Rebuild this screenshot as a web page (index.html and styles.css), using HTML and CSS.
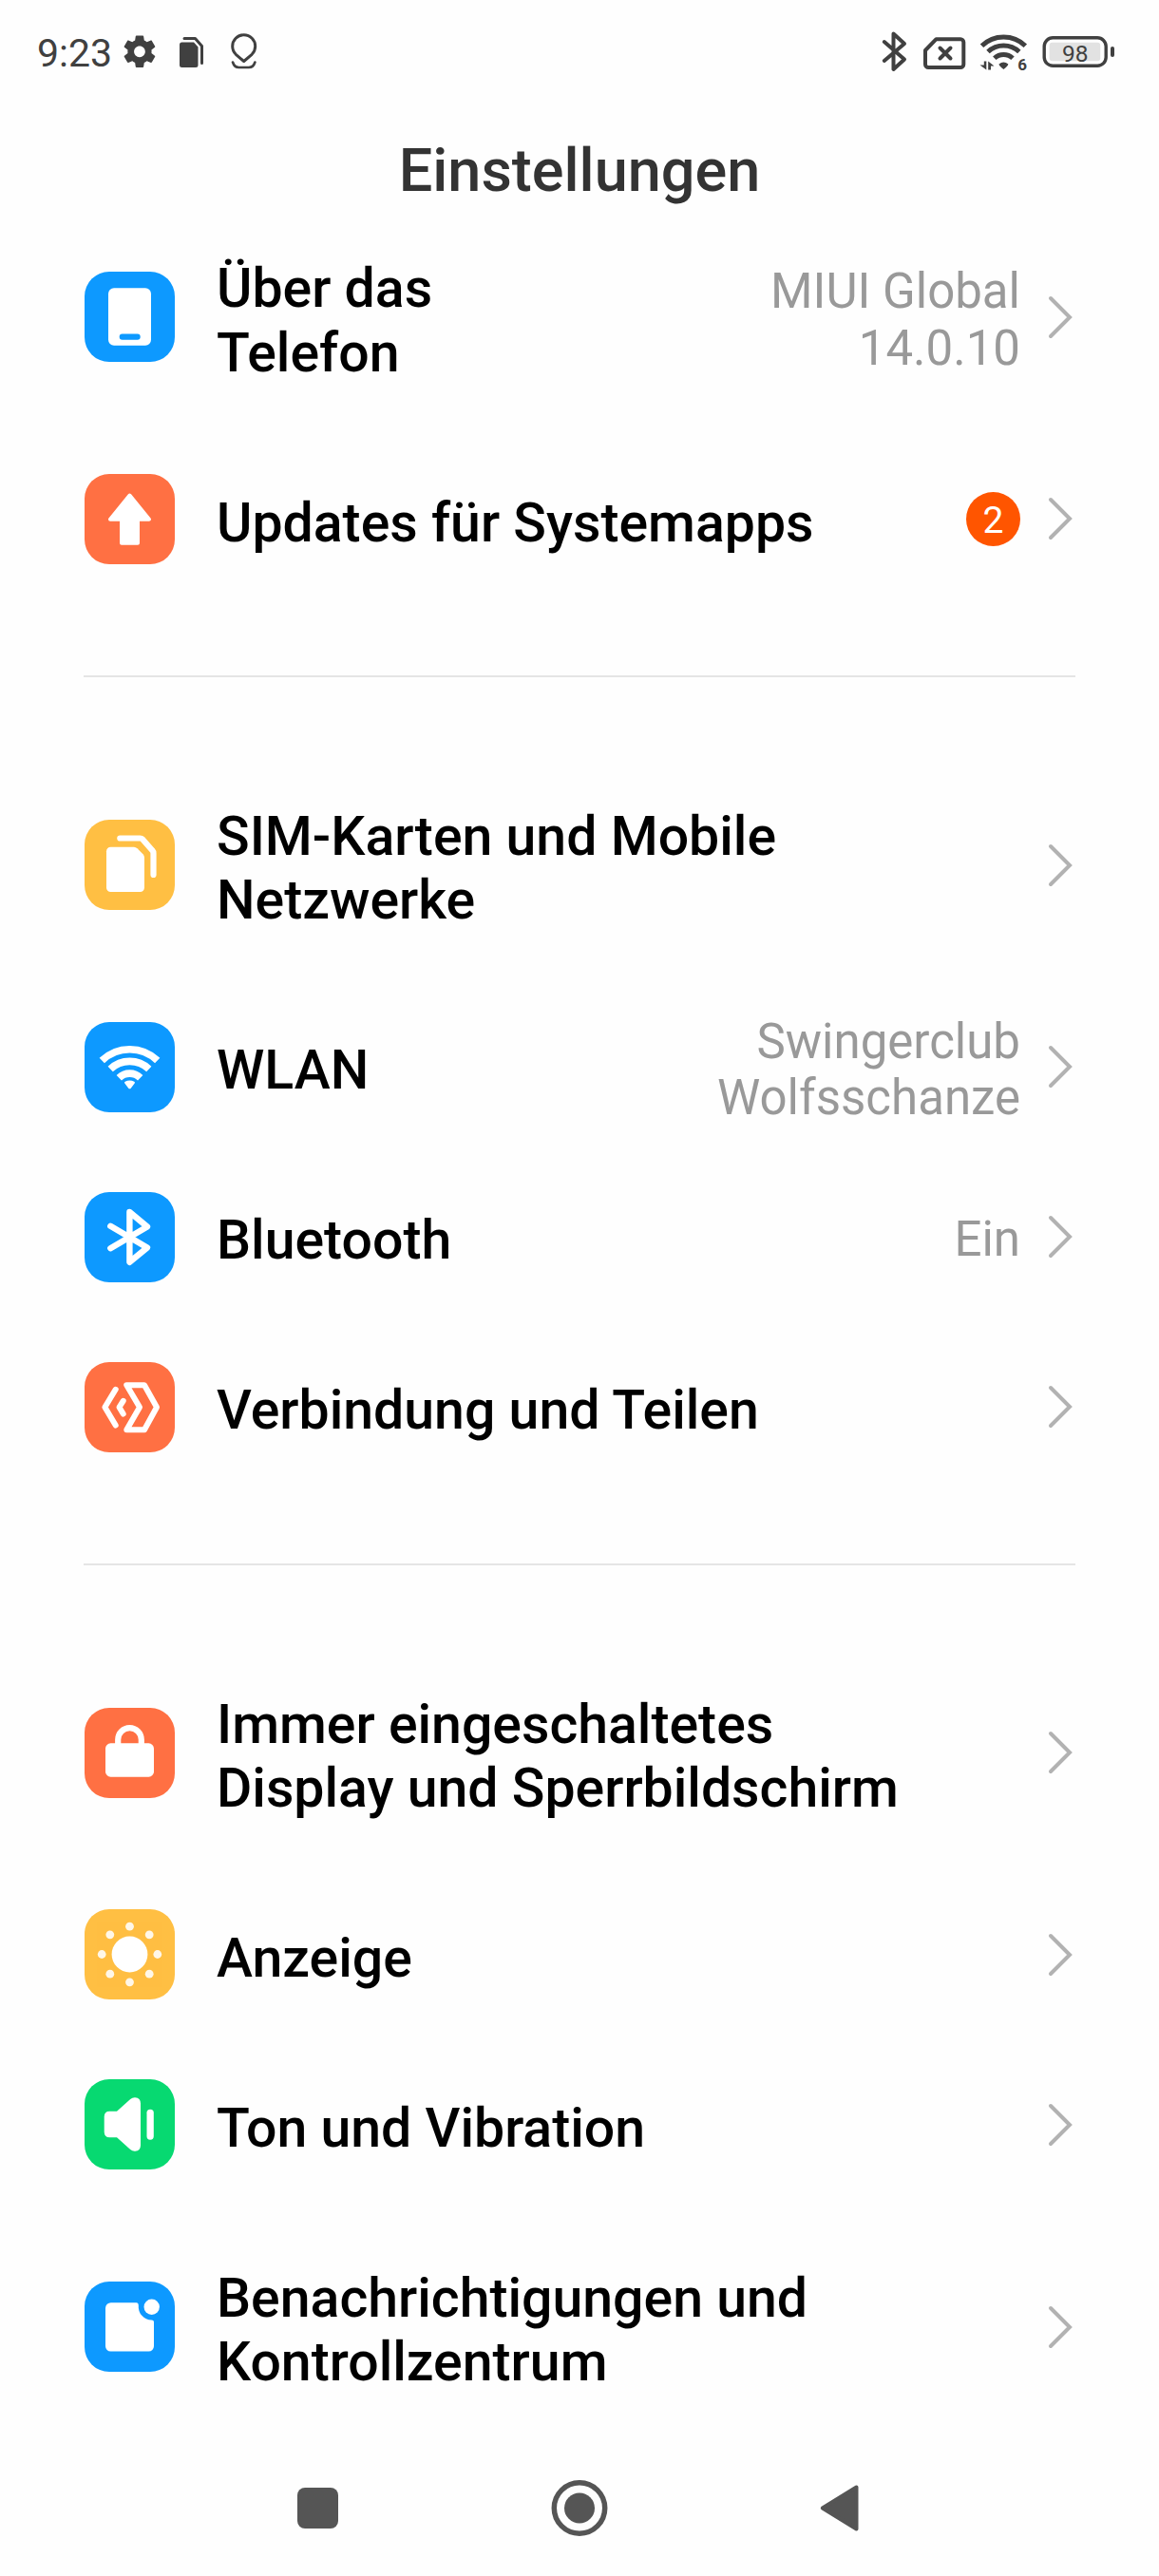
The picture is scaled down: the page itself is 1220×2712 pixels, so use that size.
FILE: index.html
```html
<!DOCTYPE html>
<html lang="de">
<head>
  <meta charset="UTF-8" />
  <meta name="viewport" content="width=device-width, initial-scale=1.0"/>
  <title>Einstellungen</title>
  <link rel="stylesheet" href="styles.css">
</head>
<body>

  <div class="status-bar">
    <div class="status-left">
      <span class="clock">9:23</span>
      <svg class="s-gear" width="34" height="44" viewBox="0 0 34 44">
        <path transform="translate(-3.2 2.1) scale(1.68)" d="M19.43 12.98c.04-.32.07-.64.07-.98s-.03-.66-.07-.98l2.11-1.65c.19-.15.24-.42.12-.64l-2-3.46c-.12-.22-.39-.3-.61-.22l-2.49 1c-.52-.4-1.08-.73-1.69-.98l-.38-2.65C14.46 2.18 14.25 2 14 2h-4c-.25 0-.46.18-.49.42l-.38 2.65c-.61.25-1.17.59-1.69.98l-2.49-1c-.23-.09-.49 0-.61.22l-2 3.46c-.13.22-.07.49.12.64l2.11 1.65c-.04.32-.07.65-.07.98s.03.66.07.98l-2.11 1.65c-.19.15-.24.42-.12.64l2 3.46c.12.22.39.3.61.22l2.49-1c.52.4 1.08.73 1.69.98l.38 2.65c.03.24.24.42.49.42h4c.25 0 .46-.18.49-.42l.38-2.65c.61-.25 1.17-.59 1.69-.98l2.49 1c.23.09.49 0 .61-.22l2-3.46c.12-.22.07-.49-.12-.64l-2.11-1.65zM12 15.5c-1.93 0-3.5-1.57-3.5-3.5s1.57-3.5 3.5-3.5 3.5 1.57 3.5 3.5-1.57 3.5-3.5 3.5z"/>
      </svg>
      <svg class="s-files" width="28" height="44" viewBox="0 0 28 44">
        <path d="M3.500 12.500h12.500l4.500 5v19a2.500 2.500 0 0 1-2.500 2.500H3.500A2.500 2.500 0 0 1 1 36.500V15a2.500 2.500 0 0 1 2.500-2.500z"/>
        <path class="line" d="M6 8.500h11.500l7 8V34.500" stroke-width="3"/>
      </svg>
      <svg class="s-pin" width="30" height="44" viewBox="0 0 30 44">
        <path class="line" d="M14.700 32.500L6.300 25.300A12 12 0 1 1 23.100 25.300z" stroke-width="3"/>
        <path class="line" d="M3 33.500c.8 2.600 2.600 5.500 6.500 5.500h10.400c3.900 0 5.700-2.900 6.500-5.500" stroke-width="2.600"/>
      </svg>
    </div>
    <div class="status-right">
      <svg width="30" height="44" viewBox="0 0 30 44">
        <path class="line" d="M2.800 12L24 30.500L12.500 41V3.500L24 14L2.800 32" stroke-width="4"/>
      </svg>
      <svg class="s-sim" width="46" height="44" viewBox="0 0 46 44">
        <path class="line" d="M14.500 9.200H40a3.300 3.300 0 0 1 3.300 3.300V35.700A3.300 3.300 0 0 1 40 39H6.300A3.300 3.300 0 0 1 3 35.700V21z" stroke-width="4"/>
        <path class="line" d="M18.500 18.500l11 11M29.500 18.500l-11 11" stroke-width="4"/>
      </svg>
      <svg class="s-wifi" width="52" height="44" viewBox="0 0 52 44">
        <path class="arc" d="M2.500 16.200A33 33 0 0 1 48.300 16.200" stroke-width="5"/>
        <path class="arc" d="M9 22.500A24 24 0 0 1 41.800 22.500" stroke-width="5"/>
        <path class="arc" d="M15.800 29.300A14 14 0 0 1 35 29.300" stroke-width="5"/>
        <path d="M20.500 35.500q4.900-4 9.800 0q0 1.500-4.900 5.500q-4.900-4-4.900-5.500z"/>
        <path d="M4.800 32.500h2.500V41.500L.5 36.500h4.300zM9.200 41.500V32.500l6.300 5h-3.500v4z"/>
        <text class="wifi-num" x="40.300" y="41.800">6</text>
      </svg>
      <svg class="s-battery" width="78" height="44" viewBox="0 0 78 44">
        <rect class="line" x="2.200" y="7.800" width="65" height="29.500" rx="9" stroke-width="3.400"/>
        <rect class="charge" x="7.700" y="12.700" width="53.500" height="19.500" rx="3"/>
        <rect x="72" y="17" width="4" height="11" rx="2"/>
        <text class="battery-num" x="34.800" y="32.500">98</text>
      </svg>
    </div>
  </div>

  <header class="title">Einstellungen</header>

  <main class="list">
    <div class="row">
      <svg class="tile blue" viewBox="0 0 95 95">
        <rect x="25" y="17.300" width="45" height="60.400" rx="6"/>
        <rect class="cut" x="36.700" y="65.600" width="22" height="6.200" rx="3"/>
      </svg>
      <div class="label">Über das<br>Telefon</div>
      <div class="value">MIUI Global<br>14.0.10</div>
      <svg class="chevron" viewBox="0 0 28 50"><path d="M4 5L24 25L4 45"/></svg>
    </div>
    <div class="row">
      <svg class="tile orange" viewBox="0 0 95 95">
        <path class="round" d="M47.500 22.500L68 47.700H56V72.700H39V47.700H27z"/>
      </svg>
      <div class="label">Updates für Systemapps</div>
      <div class="badge">2</div>
      <svg class="chevron" viewBox="0 0 28 50"><path d="M4 5L24 25L4 45"/></svg>
    </div>

    <hr>

    <div class="row">
      <svg class="tile yellow" viewBox="0 0 95 95">
        <path d="M27.500 28.700H52q2 0 3.500 1.500L61.500 36.200q1.500 1.500 1.500 3.500V71.500a4.500 4.500 0 0 1-4.500 4.500h-31a4.500 4.500 0 0 1-4.500-4.500V33.200a4.500 4.500 0 0 1 4.500-4.500z"/>
        <path class="stroke" d="M37.300 19.500H58.500q1.500 0 2.500 1L71.500 32.500q1 1 1 3V58" stroke-width="6.200"/>
      </svg>
      <div class="label">SIM-Karten und Mobile<br>Netzwerke</div>
      <svg class="chevron" viewBox="0 0 28 50"><path d="M4 5L24 25L4 45"/></svg>
    </div>
    <div class="row">
      <svg class="tile blue" viewBox="0 0 95 95">
        <path class="arc" d="M18.300 40.500A42 42 0 0 1 76.700 40.500" stroke-width="7.600"/>
        <path class="arc" d="M27.200 49.500A29.500 29.500 0 0 1 67.800 49.500" stroke-width="7.600"/>
        <path class="arc" d="M36.300 58.700A16 16 0 0 1 58.700 58.700" stroke-width="7.600"/>
        <path d="M42.300 64.500q-.8-1 .4-1.700q4.800-2.400 9.600 0q1.200.7.400 1.700l-3.800 5q-1.400 1.700-2.800 0z"/>
      </svg>
      <div class="label">WLAN</div>
      <div class="value">Swingerclub<br>Wolfsschanze</div>
      <svg class="chevron" viewBox="0 0 28 50"><path d="M4 5L24 25L4 45"/></svg>
    </div>
    <div class="row">
      <svg class="tile blue" viewBox="0 0 95 95">
        <path class="stroke" d="M27.300 35.800L66 58.500L47.400 73.800V21L66 36.500L27.300 59.200" stroke-width="6.400"/>
      </svg>
      <div class="label">Bluetooth</div>
      <div class="value">Ein</div>
      <svg class="chevron" viewBox="0 0 28 50"><path d="M4 5L24 25L4 45"/></svg>
    </div>
    <div class="row">
      <svg class="tile orange" viewBox="0 0 95 95">
        <path class="stroke" d="M32.700 28.800L21.400 47.500L32.700 66.500" stroke-width="6"/>
        <path class="stroke" d="M40.700 40.800L36.500 47.500L40.700 54.500" stroke-width="6"/>
        <path class="stroke" d="M44.300 24.200H63L76 47.500L63 71.300H44.300L58 47.500z" stroke-width="6"/>
      </svg>
      <div class="label">Verbindung und Teilen</div>
      <svg class="chevron" viewBox="0 0 28 50"><path d="M4 5L24 25L4 45"/></svg>
    </div>

    <hr>

    <div class="row">
      <svg class="tile orange" viewBox="0 0 95 95">
        <rect x="22" y="37.300" width="51" height="35.400" rx="5.500"/>
        <path class="arc" d="M35.200 39V33.400a12.300 12.300 0 0 1 24.600 0V39" stroke-width="6.200"/>
      </svg>
      <div class="label">Immer eingeschaltetes<br>Display und Sperrbildschirm</div>
      <svg class="chevron" viewBox="0 0 28 50"><path d="M4 5L24 25L4 45"/></svg>
    </div>
    <div class="row">
      <svg class="tile yellow" viewBox="0 0 95 95">
        <circle cx="47.500" cy="47.500" r="18.900"/>
        <g opacity="0.880">
          <circle cx="47.500" cy="18.200" r="4.400"/>
          <circle cx="68.200" cy="26.800" r="4.400"/>
          <circle cx="76.800" cy="47.500" r="4.400"/>
          <circle cx="68.200" cy="68.200" r="4.400"/>
          <circle cx="47.500" cy="76.800" r="4.400"/>
          <circle cx="26.800" cy="68.200" r="4.400"/>
          <circle cx="18.200" cy="47.500" r="4.400"/>
          <circle cx="26.800" cy="26.800" r="4.400"/>
        </g>
      </svg>
      <div class="label">Anzeige</div>
      <svg class="chevron" viewBox="0 0 28 50"><path d="M4 5L24 25L4 45"/></svg>
    </div>
    <div class="row">
      <svg class="tile green" viewBox="0 0 95 95">
        <path d="M26.500 33.700H34L48.200 21q2.300-2 5-1.800q5.800.6 5.800 6.300V69.500q0 5.700-5.800 6.300q-2.700.2-5-1.800L34 61.200H26.500q-5.800 0-5.800-5.800V39.500q0-5.800 5.800-5.800z"/>
        <rect x="65.500" y="31.700" width="7.300" height="32" rx="3.600"/>
      </svg>
      <div class="label">Ton und Vibration</div>
      <svg class="chevron" viewBox="0 0 28 50"><path d="M4 5L24 25L4 45"/></svg>
    </div>
    <div class="row">
      <svg class="tile blue" viewBox="0 0 95 95">
        <path d="M28 22.200H54.500q2.300 0 2.300 3A14.200 14.200 0 0 0 70.500 40.600q2.500 0 2.500 2V68a5.500 5.500 0 0 1-5.500 5.500H27.500A5.500 5.500 0 0 1 22 68V28a5.800 5.800 0 0 1 6-5.800z"/>
        <circle cx="70.700" cy="26.700" r="8.200"/>
      </svg>
      <div class="label">Benachrichtigungen und<br>Kontrollzentrum</div>
      <svg class="chevron" viewBox="0 0 28 50"><path d="M4 5L24 25L4 45"/></svg>
    </div>
  </main>

  <nav class="nav-bar">
    <svg width="60" height="60" viewBox="0 0 60 60"><rect x="9" y="9" width="43" height="43" rx="8"/></svg>
    <svg width="60" height="60" viewBox="0 0 60 60">
      <circle class="ring" cx="30" cy="30.500" r="26.700"/>
      <circle cx="30" cy="30.500" r="16"/>
    </svg>
    <svg width="60" height="60" viewBox="0 0 60 60"><path class="back" d="M9.800 30.500L45.500 8.500V52.500z"/></svg>
  </nav>

</body>
</html>
```

FILE: styles.css
```css
* {
  margin: 0;
  padding: 0;
  box-sizing: border-box;
}

body {
  width: 1220px;
  height: 2712px;
  display: flex;
  flex-direction: column;
  background: #fefefe;
  font-family: Roboto, 'Noto Sans', sans-serif;
  color: #000;
  overflow: hidden;
}

/* status bar */
.status-bar {
  display: flex;
  justify-content: space-between;
  height: 112px;
  padding: 32px 45px 0 39px;
  color: #404040;
}

.status-left,
.status-right {
  display: flex;
  height: 44px;
}

.status-bar svg {
  fill: #404040;
  overflow: visible;
}

.status-bar .line,
.status-bar .arc {
  fill: none;
  stroke: #404040;
}

.status-bar .line {
  stroke-linecap: round;
  stroke-linejoin: round;
}

.status-bar .charge {
  fill: #e2e2e2;
}

.clock {
  width: 91px;
  font-size: 41px;
  line-height: 49px;
}

.s-files {
  margin-left: 24px;
}

.s-pin {
  margin-left: 26px;
}

.s-sim {
  margin-left: 13px;
}

.s-wifi {
  margin-left: 14px;
}

.s-battery {
  margin-left: 14px;
}

.wifi-num {
  font-size: 17px;
  font-weight: 700;
}

.battery-num {
  font-size: 24.500px;
  text-anchor: middle;
}

.title {
  height: 98.600px;
  font-size: 63px;
  font-weight: 500;
  line-height: 136px;
  text-align: center;
  color: #333;
}

/* settings list */
.list {
  flex: 1;
  padding: 0 89px;
}

.row {
  display: flex;
  align-items: center;
  min-height: 179px;
}

.tile {
  flex: none;
  width: 95px;
  height: 95px;
  margin-right: 44px;
  border-radius: 26px;
  fill: #fff;
}

.tile .stroke,
.tile .arc {
  fill: none;
  stroke: #fff;
}

.tile .stroke,
.tile .round {
  stroke-linecap: round;
  stroke-linejoin: round;
}

.tile .round {
  stroke: #fff;
  stroke-width: 4;
}

.blue {
  background: #0d99ff;
}

.blue .cut {
  fill: #0d99ff;
}

.orange {
  background: #ff7043;
}

.yellow {
  background: #ffbf43;
}

.green {
  background: #07d971;
}

.label {
  flex: 1;
  padding: 59.700px 0 52px;
  font-size: 57.200px;
  font-weight: 500;
  line-height: 67.300px;
  white-space: nowrap;
}

.value {
  padding-top: 6px;
  font-size: 51px;
  line-height: 59.500px;
  text-align: right;
  color: #999;
}

.badge {
  width: 57px;
  height: 57px;
  border-radius: 50%;
  background: #ff5500;
  color: #fff;
  font-size: 39px;
  line-height: 60px;
  text-align: center;
}

.chevron {
  flex: none;
  width: 28px;
  height: 50px;
  margin: 0 1px 0 28px;
  fill: none;
  stroke: #b2b2b2;
  stroke-width: 4;
  stroke-linecap: round;
}

hr {
  height: 2px;
  margin: 75.300px -1px 74.200px;
  border: none;
  background: #e5e5e5;
}

/* navigation keys */
.nav-bar {
  display: flex;
  justify-content: space-between;
  height: 102px;
  padding: 0 304px;
  fill: #555;
}

.nav-bar .ring {
  fill: none;
  stroke: #555;
  stroke-width: 5.500;
}

.nav-bar .back {
  stroke: #555;
  stroke-width: 4;
  stroke-linejoin: round;
}
```
